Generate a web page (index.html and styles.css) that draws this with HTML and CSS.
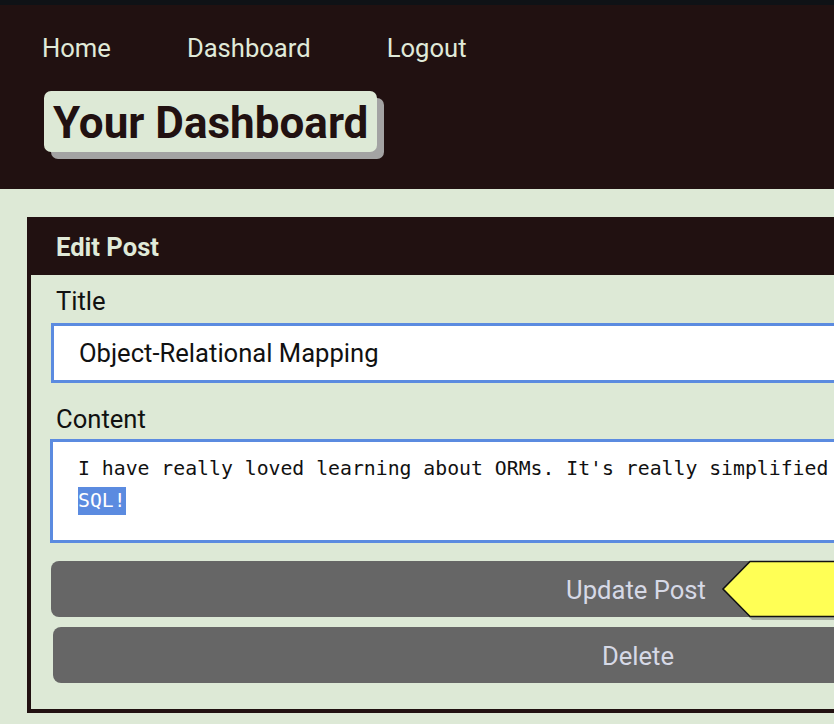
FILE: index.html
```html
<!DOCTYPE html>
<html lang="en">
<head>
<meta charset="utf-8">
<title>Your Dashboard</title>
<link rel="stylesheet" href="styles.css">
</head>
<body>
<div class="page">
  <header class="site-header">
    <nav class="nav">
      <a href="#" class="nav-link">Home</a>
      <a href="#" class="nav-link">Dashboard</a>
      <a href="#" class="nav-link">Logout</a>
    </nav>
    <h1 class="badge">Your Dashboard</h1>
  </header>
  <main class="main">
    <section class="card">
      <h2 class="card-head">Edit Post</h2>
      <form class="card-body">
        <label class="label" for="title">Title</label>
        <div class="field" id="title">Object-Relational Mapping</div>
        <label class="label label-gap">Content</label>
        <div class="area" role="textbox">I have really loved learning about ORMs. It's really simplified the way I create queries in <span class="sel">SQL!</span></div>
        <div class="btn btn-update">Update Post
          <svg class="arrow" width="200" height="64" viewBox="0 0 200 64" aria-hidden="true">
            <polygon points="4,32 31,5 200,5 200,60 31,60" fill="#8f948c" opacity="0.7"/>
            <polygon points="2,29 29,1.5 200,1.5 200,56.5 29,56.5" fill="#ffff55" stroke="#111" stroke-width="1.6" stroke-linejoin="miter"/>
          </svg>
        </div>
        <div class="btn btn-delete">Delete</div>
      </form>
    </section>
  </main>
</div>
</body>
</html>
```
FILE: styles.css
```css
html {
  overflow: hidden;
  background: #dde9d6;
}
body {
  margin: 0;
  font-family: Roboto, "Liberation Sans", sans-serif;
}
.page {
  width: 1272px;
}
.site-header {
  background: #211111;
  border-top: 5px solid #0f1216;
  padding: 28px 42px 37px;
}
.nav {
  display: flex;
  gap: 76px;
}
.nav-link {
  color: #e0ead9;
  text-decoration: none;
  font-size: 25.6px;
  line-height: 30px;
}
.badge {
  display: inline-block;
  margin: 28px 0 0 2px;
  padding: 3px 9px 0 9px;
  height: 58px;
  line-height: 58px;
  background: #dde9d6;
  color: #211111;
  font-size: 44px;
  font-weight: 700;
  border-radius: 7px;
  box-shadow: 7px 7px 0 #a3a3a3;
}
.main {
  background: #dde9d6;
  padding: 28px 27px 11px;
}
.card {
  border: 4px solid #211111;
  background: #dde9d6;
}
.card-head {
  margin: 0;
  background: #211111;
  color: #e0ead9;
  font-size: 25.6px;
  font-weight: 700;
  line-height: 28px;
  padding: 12px 25px 14px;
}
.card-body {
  display: flex;
  flex-direction: column;
  padding: 12px 20px 26px;
}
.label {
  font-size: 25.6px;
  line-height: 28px;
  color: #111;
  padding-left: 5px;
  margin-bottom: 8px;
}
.label-gap {
  margin-top: 22px;
  margin-bottom: 6px;
}
.field {
  height: 54px;
  border: 3px solid #5b8be0;
  background: #fff;
  font-size: 25.6px;
  line-height: 54px;
  padding-left: 25px;
  color: #111;
  white-space: nowrap;
}
.area {
  margin-left: -1px;
  border: 3px solid #5b8be0;
  background: #fff;
  font-family: "DejaVu Sans Mono", monospace;
  font-size: 19.8px;
  line-height: 32px;
  padding: 11px 25px 0 25px;
  box-sizing: border-box;
  height: 104px;
  color: #111;
  overflow: hidden;
}
.sel {
  background: #5b8be0;
  color: #fff;
  padding: 2px 0 3px;
}
.btn {
  position: relative;
  height: 56px;
  border-radius: 8px;
  background: #666666;
  color: #d6d9e6;
  font-size: 25.6px;
  line-height: 58px;
  text-align: center;
}
.btn-update {
  margin-top: 18px;
}
.btn-delete {
  margin: 10px -2px 0 2px;
}
.arrow {
  position: absolute;
  left: 670px;
  top: -1px;
  display: block;
}
```
